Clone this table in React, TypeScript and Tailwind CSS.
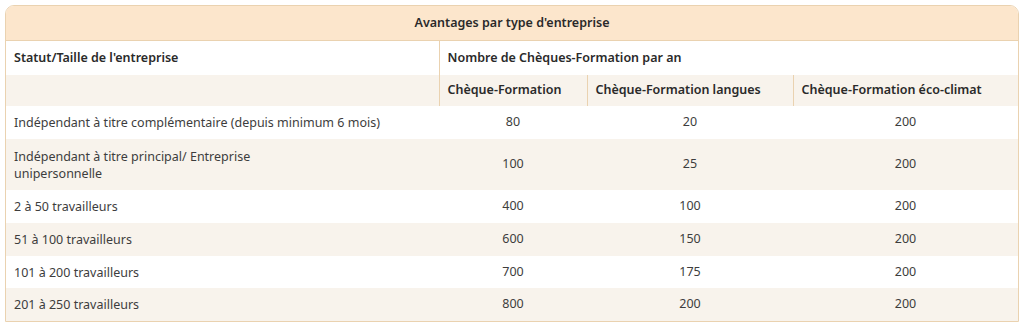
const rows = [
  { label: "Indépendant à titre complémentaire (depuis minimum 6 mois)", a: "80", b: "20", c: "200", h: "h-[33px]" },
  { label: "Indépendant à titre principal/ Entreprise unipersonnelle", a: "100", b: "25", c: "200", h: "h-[51px]", wrap: true },
  { label: "2 à 50 travailleurs", a: "400", b: "100", c: "200", h: "h-[33px]" },
  { label: "51 à 100 travailleurs", a: "600", b: "150", c: "200", h: "h-[33px]" },
  { label: "101 à 200 travailleurs", a: "700", b: "175", c: "200", h: "h-[32px]" },
  { label: "201 à 250 travailleurs", a: "800", b: "200", c: "200", h: "h-[33px]" },
];

export default function App() {
  return (
    <div className="w-[1024px] h-[326px] bg-white pt-[5px] px-[5px] font-['Noto_Sans',sans-serif] text-[12.5px] text-[#3d3d3d]">
      <div className="w-[1014px] border border-[#ead2b0] rounded-t-[9px] overflow-hidden">
        <div className="h-[35px] bg-[#fce6cc] border-b border-[#ead2b0] flex items-center justify-center font-semibold text-[#2a2a2a]">
          Avantages par type d'entreprise
        </div>
        <table className="w-full border-collapse">
          <colgroup>
            <col className="w-[433px]" />
            <col className="w-[148px]" />
            <col className="w-[206px]" />
            <col />
          </colgroup>
          <tbody>
            <tr className="h-[34px] bg-white font-semibold text-[#2a2a2a]">
              <td className="pl-[8px]">Statut/Taille de l'entreprise</td>
              <td colSpan={3} className="pl-[8px] border-l border-[#ead2b0]">
                Nombre de Chèques-Formation par an
              </td>
            </tr>
            <tr className="h-[31px] bg-[#f8f3ec] font-semibold text-[#2a2a2a]">
              <td></td>
              <td className="pl-[8px] border-l border-[#ead2b0]">Chèque-Formation</td>
              <td className="pl-[8px] border-l border-[#ead2b0]">Chèque-Formation langues</td>
              <td className="pl-[8px] border-l border-[#ead2b0]">Chèque-Formation éco-climat</td>
            </tr>
            {rows.map((r, i) => (
              <tr key={i} className={`${r.h} ${i % 2 === 0 ? "bg-white" : "bg-[#f8f3ec]"}`}>
                <td className="pl-[8px] leading-[17px]">
                  {r.wrap ? (
                    <>
                      Indépendant à titre principal/ Entreprise
                      <br />
                      unipersonnelle
                    </>
                  ) : (
                    r.label
                  )}
                </td>
                <td className="text-center">{r.a}</td>
                <td className="text-center">{r.b}</td>
                <td className="text-center">{r.c}</td>
              </tr>
            ))}
          </tbody>
        </table>
      </div>
    </div>
  );
}
